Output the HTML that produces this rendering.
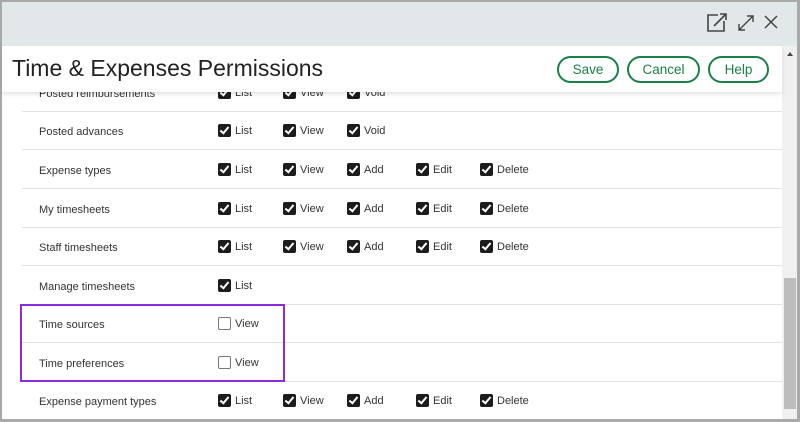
<!DOCTYPE html>
<html><head><style>
*{margin:0;padding:0;box-sizing:border-box}
body{width:800px;height:422px;overflow:hidden;background:#fff;font-family:"Liberation Sans",Arial,sans-serif;position:relative}
.frame{position:absolute;left:0;top:0;width:800px;height:422px;border:2px solid #a9a9a9;border-top-width:2px;border-right-width:3px;border-bottom-width:3px}
.top{position:absolute;left:2px;top:2px;width:795px;height:44px;background:#e2e8ea}
.title{position:absolute;left:2px;top:46px;width:780px;height:46px;background:#fff;box-shadow:0 2px 4px rgba(0,0,0,.12);z-index:3}
.title h1{position:absolute;left:10px;top:9px;font-size:23px;font-weight:normal;color:#222}
.btn{position:absolute;top:10px;height:27px;border:2px solid #1a7f48;border-radius:14px;color:#1a7f48;font-size:13.5px;text-align:center;line-height:23px}
.row{position:absolute;left:22px;width:760px;height:39px;border-bottom:1px solid #dde2e6;font-size:11px;color:#333}
.row .l{position:absolute;left:17px;top:15px}
.cb{position:absolute;top:14px;font-size:11px}
.cb i{position:absolute;left:0;top:-1px;width:13px;height:13px;background:#1c1c1c;border-radius:2px}
.cb i:after{content:"";position:absolute;left:4px;top:1px;width:3px;height:7px;border:solid #fff;border-width:0 2px 2px 0;transform:rotate(40deg)}
.cb i.u{background:#fff;border:1px solid #777}
.cb i.u:after{display:none}
.cb span{position:absolute;left:17px;top:0;white-space:nowrap}
.sb{position:absolute;left:782px;top:46px;width:15px;height:373px;background:#f0f0f0}
.th{position:absolute;left:784px;top:278px;width:12px;height:131px;background:#bdbdbd}
.box{position:absolute;left:20px;top:304px;width:265px;height:78px;border:2px solid #8a2be2;z-index:2}
</style></head><body>
<div class="top">
<svg style="position:absolute;left:704px;top:10px" width="24" height="22" viewBox="0 0 24 22"><path d="M12 3H2v16h16V9" fill="none" stroke="#444" stroke-width="1.6"/><path d="M8 14L20 2M14 2h6v6" fill="none" stroke="#444" stroke-width="1.6"/></svg>
<svg style="position:absolute;left:734px;top:11px" width="20" height="20" viewBox="0 0 20 20"><path d="M3 17L17 3M11 3h6v6M3 11v6h6" fill="none" stroke="#444" stroke-width="1.4"/></svg>
<svg style="position:absolute;left:761px;top:12px" width="16" height="16" viewBox="0 0 16 16"><path d="M2 2L14 14M14 2L2 14" stroke="#444" stroke-width="1.5"/></svg>
</div>
<div class="title"><h1>Time &amp; Expenses Permissions</h1>
<div class="btn" style="left:555px;width:62px">Save</div>
<div class="btn" style="left:625px;width:73px">Cancel</div>
<div class="btn" style="left:706px;width:61px">Help</div>
</div>
<div class="row" style="top:73px"><div class="l">Posted reimbursements</div><div class="cb" style="left:196px"><i></i><span>List</span></div><div class="cb" style="left:261px"><i></i><span>View</span></div><div class="cb" style="left:325px"><i></i><span>Void</span></div></div>
<div class="row" style="top:111px"><div class="l">Posted advances</div><div class="cb" style="left:196px"><i></i><span>List</span></div><div class="cb" style="left:261px"><i></i><span>View</span></div><div class="cb" style="left:325px"><i></i><span>Void</span></div></div>
<div class="row" style="top:150px"><div class="l">Expense types</div><div class="cb" style="left:196px"><i></i><span>List</span></div><div class="cb" style="left:261px"><i></i><span>View</span></div><div class="cb" style="left:325px"><i></i><span>Add</span></div><div class="cb" style="left:394px"><i></i><span>Edit</span></div><div class="cb" style="left:458px"><i></i><span>Delete</span></div></div>
<div class="row" style="top:189px"><div class="l">My timesheets</div><div class="cb" style="left:196px"><i></i><span>List</span></div><div class="cb" style="left:261px"><i></i><span>View</span></div><div class="cb" style="left:325px"><i></i><span>Add</span></div><div class="cb" style="left:394px"><i></i><span>Edit</span></div><div class="cb" style="left:458px"><i></i><span>Delete</span></div></div>
<div class="row" style="top:227px"><div class="l">Staff timesheets</div><div class="cb" style="left:196px"><i></i><span>List</span></div><div class="cb" style="left:261px"><i></i><span>View</span></div><div class="cb" style="left:325px"><i></i><span>Add</span></div><div class="cb" style="left:394px"><i></i><span>Edit</span></div><div class="cb" style="left:458px"><i></i><span>Delete</span></div></div>
<div class="row" style="top:266px"><div class="l">Manage timesheets</div><div class="cb" style="left:196px"><i></i><span>List</span></div></div>
<div class="row" style="top:304px"><div class="l">Time sources</div><div class="cb" style="left:196px"><i class="u"></i><span>View</span></div></div>
<div class="row" style="top:343px"><div class="l">Time preferences</div><div class="cb" style="left:196px"><i class="u"></i><span>View</span></div></div>
<div class="row" style="top:381px"><div class="l">Expense payment types</div><div class="cb" style="left:196px"><i></i><span>List</span></div><div class="cb" style="left:261px"><i></i><span>View</span></div><div class="cb" style="left:325px"><i></i><span>Add</span></div><div class="cb" style="left:394px"><i></i><span>Edit</span></div><div class="cb" style="left:458px"><i></i><span>Delete</span></div></div>
<div class="box"></div>
<div class="sb"></div><div class="th"></div>
<div style="position:absolute;left:787px;top:52px;width:0;height:0;border:3px solid transparent;border-bottom:4px solid #444;border-top:0;z-index:4"></div>
<div class="frame"></div>
</body></html>
